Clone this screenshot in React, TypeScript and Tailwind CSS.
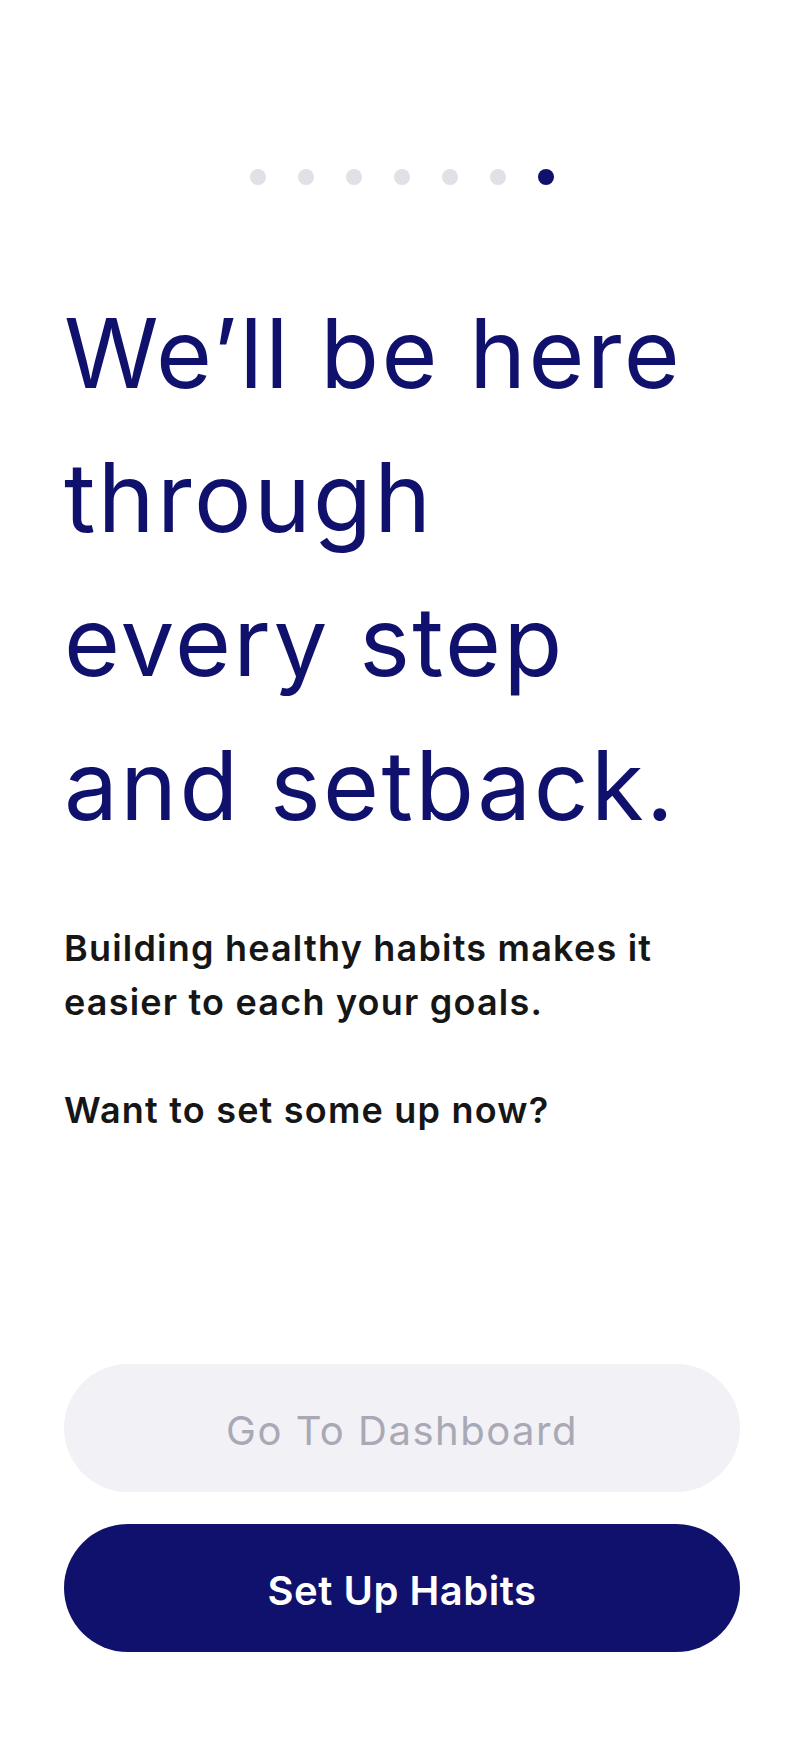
import React from 'react';

const steps = [0, 1, 2, 3, 4, 5, 6];
const current = 6;

export default function App() {
  return (
    <div className="min-h-screen bg-white flex flex-col px-16 pt-[169px] pb-24 font-['Inter','Liberation_Sans',sans-serif]">
      {/* step dots */}
      <div className="flex justify-center gap-8">
        {steps.map((s) => (
          <span
            key={s}
            className={s === current ? 'size-4 rounded-full bg-[#10106d]' : 'size-4 rounded-full bg-[#e0e0e7]'}
          />
        ))}
      </div>

      <h1 className="mt-24 text-[96px] leading-[144px] font-normal tracking-[2.4px] text-[#10106d]">
        We’ll be here
        <br />
        through
        <br />
        every step
        <br />
        and setback.
      </h1>

      <p className="mt-16 text-[36px] leading-[54px] font-semibold tracking-[1.2px] text-[#161616]">
        Building healthy habits makes it easier to each your goals.
      </p>
      <p className="mt-[54px] text-[36px] leading-[54px] font-semibold tracking-[1.2px] text-[#161616]">
        Want to set some up now?
      </p>

      <div className="mt-auto flex flex-col gap-8">
        <button
          type="button"
          className="h-32 w-full rounded-full bg-[#f1f1f6] pt-[6px] text-[40px] font-normal tracking-[1.5px] text-[#a9a9b5]"
        >
          Go To Dashboard
        </button>
        <button
          type="button"
          className="h-32 w-full rounded-full bg-[#10106d] pt-[6px] text-[40px] font-semibold tracking-[0.5px] text-white"
        >
          Set Up Habits
        </button>
      </div>
    </div>
  );
}
